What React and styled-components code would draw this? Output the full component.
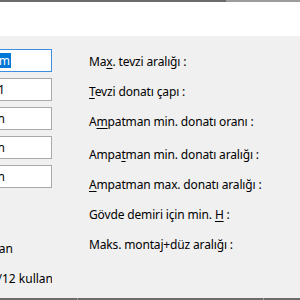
import React from "react";
import styled, { createGlobalStyle } from "styled-components";

const GlobalStyle = createGlobalStyle`
  html, body {
    margin: 0;
    padding: 0;
    background: #f0f0f0;
  }
  body {
    font-family: "Noto Sans", "Liberation Sans", sans-serif;
    font-size: 12px;
    color: #000;
  }
`;

const fields = [
  { text: "30 cm", end: 11, selected: true },
  { text: "Ø 21", end: 5 },
  { text: "0.0015 oran", end: 5 },
  { text: "25 cm min", end: 5 },
  { text: "30 cm min", end: 5 },
];

const notes = [
  { text: "Ana donatı olarak kullan", end: 13 },
  { text: "Ø10/12 kullan", end: 53 },
];

const App = () => {
  return (
    <Window>
      <GlobalStyle />
      <TopStrip />
      <Main>
        <LeftColumn>
          {fields.map((f, i) => (
            <Field key={i} $focused={f.selected}>
              <Clip $end={f.end}>
                <Value $selected={f.selected}>{f.text}</Value>
              </Clip>
            </Field>
          ))}
          <Notes>
            {notes.map((n, i) => (
              <Note key={i}>
                <Clip $end={n.end}>
                  <span>{n.text}</span>
                </Clip>
              </Note>
            ))}
          </Notes>
        </LeftColumn>
        <Labels>
          <Label>
            Ma<u>x</u>. tevzi aralığı :
          </Label>
          <Label>
            <u>T</u>evzi donatı çapı :
          </Label>
          <Label>
            A<u>m</u>patman min. donatı oranı :
          </Label>
          <Label $gap={3}>
            Ampa<u>t</u>man min. donatı aralığı :
          </Label>
          <Label>
            <u>A</u>mpatman max. donatı aralığı :
          </Label>
          <Label>
            Gövde demiri için min. <u>H</u> :
          </Label>
          <Label>Maks. montaj+düz aralığı :</Label>
        </Labels>
      </Main>
      <BottomEdge />
    </Window>
  );
};

const Window = styled.div`
  width: 300px;
  height: 300px;
  display: flex;
  flex-direction: column;
  overflow: hidden;
  background: #f0f0f0;
`;

// white header area, dark frame line along the top
const TopStrip = styled.div`
  height: 36px;
  flex-shrink: 0;
  background: linear-gradient(to right, #6b6b6b 226px, #9c9c9c 226px) top / 100% 2px no-repeat,
    #ffffff;
`;

const Main = styled.div`
  flex: 1;
  display: flex;
  min-height: 0;
`;

const LeftColumn = styled.div`
  width: 52px;
  flex-shrink: 0;
  padding-top: 13px;
  display: flex;
  flex-direction: column;
  gap: 6px;
`;

const Field = styled.div`
  height: 23px;
  box-sizing: border-box;
  background: #fff;
  border: 1px solid ${(p) => (p.$focused ? "#3d8ee0" : "#a9a9a9")};
  border-left: none;
  display: flex;
  align-items: center;
  overflow: hidden;
`;

// right-aligned box so the start of the value runs off the left edge
const Clip = styled.div`
  width: ${(p) => p.$end}px;
  flex-shrink: 0;
  display: flex;
  justify-content: flex-end;
  white-space: nowrap;
`;

const Value = styled.span`
  flex-shrink: 0;
  line-height: 15px;
  padding-right: ${(p) => (p.$selected ? "1px" : "0")};
  background: ${(p) => (p.$selected ? "#0078d7" : "transparent")};
  color: ${(p) => (p.$selected ? "#fff" : "#000")};
`;

const Notes = styled.div`
  margin-top: 39px;
  display: flex;
  flex-direction: column;
`;

const Note = styled.div`
  height: 30px;
  display: flex;
  align-items: center;
  overflow: hidden;
`;

const Labels = styled.div`
  margin-left: 37px;
  padding-top: 11px;
  display: flex;
  flex-direction: column;
`;

const Label = styled.div`
  height: 30px;
  line-height: 30px;
  margin-top: ${(p) => p.$gap || 0}px;
  white-space: nowrap;
  letter-spacing: -0.15px;
  u {
    text-decoration-thickness: 1px;
    text-underline-offset: 2px;
  }
`;

const BottomEdge = styled.div`
  height: 2px;
  flex-shrink: 0;
  background: linear-gradient(
    to right,
    #6b6b6b 77px,
    #9c9c9c 77px,
    #9c9c9c 78px,
    #6b6b6b 78px,
    #6b6b6b 263px,
    #9c9c9c 263px,
    #9c9c9c 264px,
    #6b6b6b 264px
  );
`;

export default App;
